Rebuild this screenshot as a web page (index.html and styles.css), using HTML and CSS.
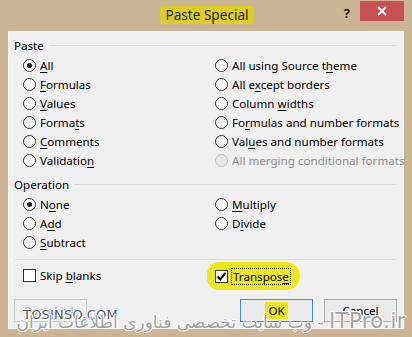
FILE: index.html
```html
<!DOCTYPE html>
<html>
<head>
<meta charset="utf-8">
<link rel="stylesheet" href="styles.css">
</head>
<body>
<div class="window">
  <div class="titlebar">
    <div class="title"><span class="hl">Paste Special</span></div>
    <div class="controls">
      <span class="help">?</span>
      <span class="close"><svg width="10" height="10" viewBox="0 0 10 10"><path d="M1 1L9 9M9 1L1 9" stroke="#fff" stroke-width="1.8"/></svg></span>
    </div>
  </div>
  <div class="dialog">
    <div class="group-head"><span>Paste</span><i class="rule"></i></div>
    <div class="opts">
      <label class="opt"><span class="radio on"></span><span><u>A</u>ll</span></label>
      <label class="opt"><span class="radio"></span><span>All using Source t<u>h</u>eme</span></label>
      <label class="opt"><span class="radio"></span><span><u>F</u>ormulas</span></label>
      <label class="opt"><span class="radio"></span><span>All e<u>x</u>cept borders</span></label>
      <label class="opt"><span class="radio"></span><span><u>V</u>alues</span></label>
      <label class="opt"><span class="radio"></span><span>Column <u>w</u>idths</span></label>
      <label class="opt"><span class="radio"></span><span>Forma<u>t</u>s</span></label>
      <label class="opt"><span class="radio"></span><span>Fo<u>r</u>mulas and number formats</span></label>
      <label class="opt"><span class="radio"></span><span><u>C</u>omments</span></label>
      <label class="opt"><span class="radio"></span><span>Val<u>u</u>es and number formats</span></label>
      <label class="opt"><span class="radio"></span><span>Validatio<u>n</u></span></label>
      <label class="opt disabled"><span class="radio"></span><span>All merging conditional formats</span></label>
    </div>
    <div class="group-head op"><span>Operation</span><i class="rule"></i></div>
    <div class="opts">
      <label class="opt"><span class="radio on"></span><span>N<u>o</u>ne</span></label>
      <label class="opt"><span class="radio"></span><span><u>M</u>ultiply</span></label>
      <label class="opt"><span class="radio"></span><span>A<u>d</u>d</span></label>
      <label class="opt"><span class="radio"></span><span>D<u>i</u>vide</span></label>
      <label class="opt"><span class="radio"></span><span><u>S</u>ubtract</span></label>
      <span></span>
    </div>
    <div class="sep"></div>
    <div class="opts checks">
      <label class="opt"><span class="check"></span><span>Skip <u>b</u>lanks</span></label>
      <label class="opt tp"><span class="check on"><svg width="11" height="11" viewBox="0 0 11 11"><path d="M1.5 5.5L4.3 8.5L9.5 1.8" fill="none" stroke="#000" stroke-width="2"/></svg></span><span class="focus">Transpos<u>e</u></span></label>
    </div>
    <div class="buttons">
      <span class="btn dis">Paste <u>L</u>ink</span>
      <span class="spacer"></span>
      <span class="btn def"><span class="hl2">OK</span></span>
      <span class="btn">Cancel</span>
    </div>
  </div>
  <div class="tosinso">TOSINSO.COM</div>
  <div class="watermark" dir="rtl"><span class="wm-latin" dir="ltr">ITPro.ir</span> - وب سایت تخصصی فناوری اطلاعات ایران</div>
</div>
</body>
</html>
```
FILE: styles.css
```css
* { box-sizing: border-box; }
html, body { margin: 0; padding: 0; }
body {
  background: #cbb594;
  font-family: "Noto Sans", "DejaVu Sans", sans-serif;
  font-size: 11.6px;
  color: #000;
}
.window {
  position: relative;
  width: 412px;
  height: 337px;
  background: #cbb594;
  overflow: hidden;
}
.titlebar {
  display: grid;
  height: 31px;
}
.title, .controls { grid-area: 1 / 1; }
.title {
  justify-self: center;
  padding-top: 6px;
  font-size: 13.6px;
  line-height: 18px;
  color: #1f1f1f;
}
.title .hl {
  display: inline-block;
  background: #dccd22;
  padding: 0 5px;
  border-radius: 3px;
  margin-left: 2px;
}
.controls {
  justify-self: end;
  display: flex;
  align-items: flex-start;
  margin-right: 8px;
  padding-top: 1px;
}
.help {
  font-weight: bold;
  font-size: 13px;
  color: #222;
  margin-top: 3px;
  margin-right: 10px;
}
.close {
  width: 44px;
  height: 20px;
  background: #c75050;
  display: flex;
  align-items: center;
  justify-content: center;
}
.dialog {
  margin: 0 8px;
  height: 298px;
  background: #f0f0f0;
  border: 1px solid #f9f9f9;
  padding: 5px 6px 0 5px;
  display: flex;
  flex-direction: column;
}
.group-head {
  display: flex;
  align-items: center;
  height: 16px;
  gap: 5px;
}
.group-head .rule {
  flex: 1;
  height: 1px;
  background: #dcdcdc;
  margin-right: 1px;
}
.group-head.op { margin-top: 6px; }
.opts {
  display: grid;
  grid-template-columns: 192px 1fr;
  grid-auto-rows: 19px;
  padding-left: 9px;
  margin-top: 3px;
}
.opt {
  display: flex;
  align-items: center;
  gap: 4px;
  white-space: nowrap;
}
.opt u { text-decoration-thickness: 1px; text-underline-offset: 2px; }
.radio {
  position: relative;
  width: 13px;
  height: 13px;
  border-radius: 50%;
  border: 1px solid #333;
  background: #fff;
  flex: none;
}
.radio.on::after {
  content: "";
  position: absolute;
  left: 3px; top: 3px;
  width: 5px; height: 5px;
  border-radius: 50%;
  background: #1a1a1a;
}
.opt.disabled { color: #8e8e8e; }
.opt.disabled .radio { border-color: #bcbcbc; background: #e6e6e6; }
.sep {
  height: 1px;
  background: #dcdcdc;
  margin: 7px 1px 0 1px;
}
.checks { margin-top: 6px; }
.check {
  width: 13px;
  height: 13px;
  border: 1px solid #333;
  background: #fff;
  flex: none;
  display: flex;
  align-items: center;
  justify-content: center;
}
.tp {
  position: relative;
  justify-self: start;
  margin-left: -8px;
  padding: 0 10px 0 8px;
  background: #efe91a;
  border-radius: 12px 14px 14px 12px;
  height: 28px;
  margin-top: -4px;
}
.focus {
  outline: 1px dotted #222;
  outline-offset: 0;
  padding: 0 1px;
}
.buttons {
  display: flex;
  gap: 11px;
  margin-top: 14px;
}
.spacer { flex: 1; }
.btn {
  width: 73px;
  height: 23px;
  border: 1px solid #adadad;
  background: #ebebeb;
  display: flex;
  align-items: center;
  justify-content: center;
}
.btn.dis { color: #a3a3a3; border-color: #c8c8c8; background: #f0f0f0; }
.btn.def { border-color: #3c8ce0; }
.hl2 { background: #efe91a; padding: 1px 3px; }
.tosinso {
  position: absolute;
  left: 23px;
  top: 307px;
  font-family: "DejaVu Sans", sans-serif;
  font-size: 13px;
  letter-spacing: 0.2px;
  color: #5a5a5a;
  text-shadow: 1px 0 #fff, -1px 0 #fff, 0 1px #fff, 0 -1px #fff;
}
.watermark {
  position: absolute;
  left: 4px;
  width: 402px;
  top: 310px;
  font-family: "DejaVu Sans", sans-serif;
  font-size: 17px;
  line-height: 22px;
  color: #a2a2a2;
  white-space: nowrap;
  text-shadow: 1px 0 #fff, -1px 0 #fff, 0 1px #fff, 0 -1px #fff;
}
.wm-latin {
  font-size: 21px;
  letter-spacing: 0.5px;
}
```
